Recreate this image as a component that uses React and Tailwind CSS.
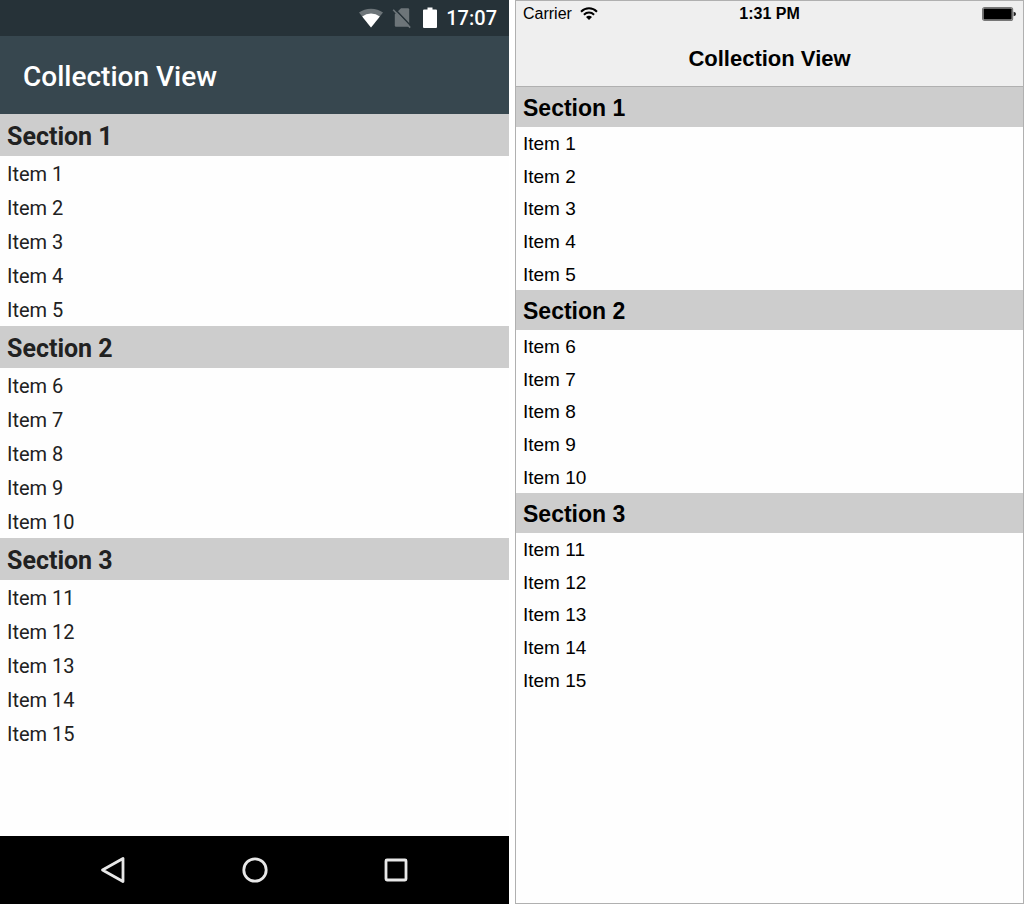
const sections = [
  { title: "Section 1", items: ["Item 1", "Item 2", "Item 3", "Item 4", "Item 5"] },
  { title: "Section 2", items: ["Item 6", "Item 7", "Item 8", "Item 9", "Item 10"] },
  { title: "Section 3", items: ["Item 11", "Item 12", "Item 13", "Item 14", "Item 15"] },
];

function AndroidWifi() {
  return (
    <svg width="26" height="20" viewBox="0 0 26 20" aria-hidden="true">
      <path d="M1 4.6Q6 .8 13 .8T25 4.6L13 19.6Z" fill="#6d7579" />
      <path d="M4.200 8.500Q8 5.500 13 5.500T21.800 8.500L13 19.600Z" fill="#fff" />
    </svg>
  );
}

function NoSim() {
  return (
    <svg width="20" height="22" viewBox="0 0 20 22" aria-hidden="true">
      <path d="M9 1.200H16Q17.200 1.200 17.200 2.400V18.500Q17.200 19.700 16 19.700H4Q2.800 19.700 2.800 18.500V7.200Z" fill="#6d7579" />
      <path d="M2.600 1.800L19.200 19.200" stroke="#263238" strokeWidth="1.600" />
      <path d="M1.200 2.800L18.200 20.600" stroke="#6d7579" strokeWidth="1.600" />
    </svg>
  );
}

function AndroidBattery() {
  return (
    <svg width="14" height="22" viewBox="0 0 14 22" aria-hidden="true">
      <path d="M4.500 .5H9.500V2.500H13Q14 2.500 14 3.500V20Q14 21 13 21H1Q0 21 0 20V3.500Q0 2.500 1 2.500H4.500Z" fill="#fff" />
    </svg>
  );
}

function AndroidScreen() {
  return (
    <section className="flex flex-col bg-[#fefefe] font-['Roboto',sans-serif] text-[#212121]">
      <div className="flex h-9 items-center justify-end bg-[#263238] pr-3 text-white">
        <AndroidWifi />
        <span className="w-2" />
        <NoSim />
        <span className="w-[11px]" />
        <AndroidBattery />
        <time className="ml-[9px] text-[20px] leading-6 font-medium">17:07</time>
      </div>
      <header className="flex h-[78px] items-center bg-[#37474f] px-[23px] pt-1">
        <h1 className="text-[28px] leading-8 font-medium text-white">Collection View</h1>
      </header>
      <main className="flex-1">
        {sections.map((s) => (
          <div key={s.title}>
            <h2 className="flex h-[42px] items-center bg-[#cdcdcd] px-[7px] pt-1 text-[25px] leading-8 font-bold">{s.title}</h2>
            <ul>
              {s.items.map((item) => (
                <li key={item} className="flex h-[34px] items-center px-[7px] pt-0.5 text-[20px] leading-6">{item}</li>
              ))}
            </ul>
          </div>
        ))}
      </main>
      <nav className="flex h-[68px] items-center justify-center gap-[113px] bg-black">
        <button type="button" aria-label="Back">
          <svg width="28" height="28" viewBox="0 0 28 28" fill="none" stroke="#e8e8e8" strokeWidth="2.800" strokeLinejoin="round">
            <path d="M23 2.500V25.500L2.500 14Z" />
          </svg>
        </button>
        <button type="button" aria-label="Home">
          <svg width="28" height="28" viewBox="0 0 28 28" fill="none" stroke="#e8e8e8" strokeWidth="2.800">
            <circle cx="14" cy="14" r="11.200" />
          </svg>
        </button>
        <button type="button" aria-label="Overview">
          <svg width="28" height="28" viewBox="0 0 28 28" fill="none" stroke="#e8e8e8" strokeWidth="2.800">
            <rect x="4" y="4" width="20" height="20" rx="1" />
          </svg>
        </button>
      </nav>
    </section>
  );
}

function IosScreen() {
  return (
    <section className="flex flex-col border border-[#b0b0b0] bg-[#fefefe] font-['Liberation_Sans',sans-serif] text-black">
      <header className="h-[86px] border-b border-[#b0b0b0] bg-[#efefef]">
        <div className="grid h-[26px] grid-cols-3 items-center px-[7px] text-[16px] leading-5">
          <div className="flex items-center gap-2">
            <span>Carrier</span>
            <svg width="18" height="14" viewBox="0 0 18 14" fill="none" stroke="#000" strokeWidth="2" aria-hidden="true">
              <path d="M1 4.700Q4.500 1.300 9 1.300T17 4.700" />
              <path d="M3.900 7.800Q6.200 5.600 9 5.600T14.100 7.800" />
              <path d="M6 9.900Q9 7.800 12 9.900L9 12.900Z" fill="#000" stroke="none" />
            </svg>
          </div>
          <time className="text-center font-bold">1:31 PM</time>
          <svg className="justify-self-end" width="34" height="14" viewBox="0 0 34 14" aria-hidden="true">
            <rect x=".6" y=".6" width="30" height="12.800" rx="2" fill="none" stroke="#777" strokeWidth="1.200" />
            <rect x="1.500" y="1.500" width="28.200" height="11" rx="1" fill="#000" />
            <path d="M31.600 4.700Q34 5.200 34 7T31.600 9.300Z" fill="#222" />
          </svg>
        </div>
        <h1 className="pt-4 text-center text-[22px] leading-8 font-bold">Collection View</h1>
      </header>
      <main className="flex-1">
        {sections.map((s) => (
          <div key={s.title}>
            <h2 className="flex h-10 items-center bg-[#cdcdcd] px-[7px] pt-0.5 text-[23px] leading-8 font-bold">{s.title}</h2>
            <ul className="grid h-[163px] grid-rows-5">
              {s.items.map((item) => (
                <li key={item} className="flex items-center px-[7px] pt-0.5 text-[19px] leading-6">{item}</li>
              ))}
            </ul>
          </div>
        ))}
      </main>
    </section>
  );
}

export default function App() {
  return (
    <div className="grid min-h-screen grid-cols-2 gap-1.5 bg-white">
      <AndroidScreen />
      <IosScreen />
    </div>
  );
}
